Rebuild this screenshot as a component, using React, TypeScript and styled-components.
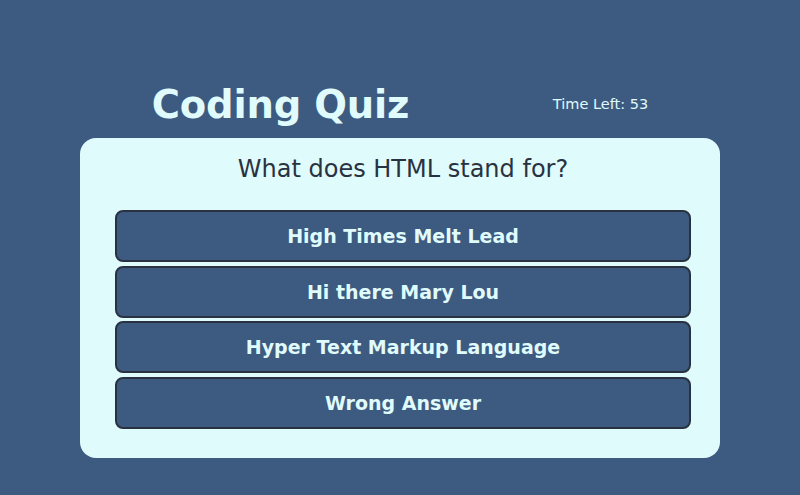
import React from "react";
import styled, { createGlobalStyle } from "styled-components";

const Global = createGlobalStyle`
  html, body { margin: 0; padding: 0; background: #3d5a80; }
  body { font-family: "DejaVu Sans", Verdana, sans-serif; }
`;

const Page = styled.div`
  width: 800px;
  height: 495px;
  display: flex;
  flex-direction: column;
  align-items: center;
  padding-top: 74px;
  box-sizing: border-box;
`;

const Header = styled.header`
  width: 640px;
  display: flex;
  justify-content: space-around;
  align-items: center;
  height: 60px;
`;

const Title = styled.h1`
  margin: 0;
  color: #e0fbfc;
  font-size: 38.5px;
  font-weight: bold;
  letter-spacing: -0.2px;
`;

const Timer = styled.div`
  color: #e0fbfc;
  font-size: 14.5px;
`;

const Card = styled.main`
  margin-top: 4px;
  width: 640px;
  box-sizing: border-box;
  background: #e0fbfc;
  border-radius: 16px;
  padding: 14px 29px 29px 35px;
  display: flex;
  flex-direction: column;
  align-items: center;
`;

const Question = styled.h2`
  margin: 0 0 24px;
  color: #293241;
  font-size: 24px;
  font-weight: normal;
  height: 34px;
  line-height: 34px;
`;

const Answers = styled.div`
  width: 100%;
  display: flex;
  flex-direction: column;
  gap: 3.5px;
`;

const Answer = styled.button`
  height: 52px;
  width: 100%;
  background: #3d5a80;
  border: 2px solid #293241;
  border-radius: 8px;
  color: #e0fbfc;
  font-family: "DejaVu Sans", Verdana, sans-serif;
  font-weight: bold;
  font-size: 19px;
  cursor: pointer;
`;

const answers = [
  "High Times Melt Lead",
  "Hi there Mary Lou",
  "Hyper Text Markup Language",
  "Wrong Answer",
];

export default function App() {
  return (
    <>
      <Global />
      <Page>
        <Header>
          <Title>Coding Quiz</Title>
          <Timer>Time Left: 53</Timer>
        </Header>
        <Card>
          <Question>What does HTML stand for?</Question>
          <Answers>
            {answers.map((a) => (
              <Answer key={a}>{a}</Answer>
            ))}
          </Answers>
        </Card>
      </Page>
    </>
  );
}
